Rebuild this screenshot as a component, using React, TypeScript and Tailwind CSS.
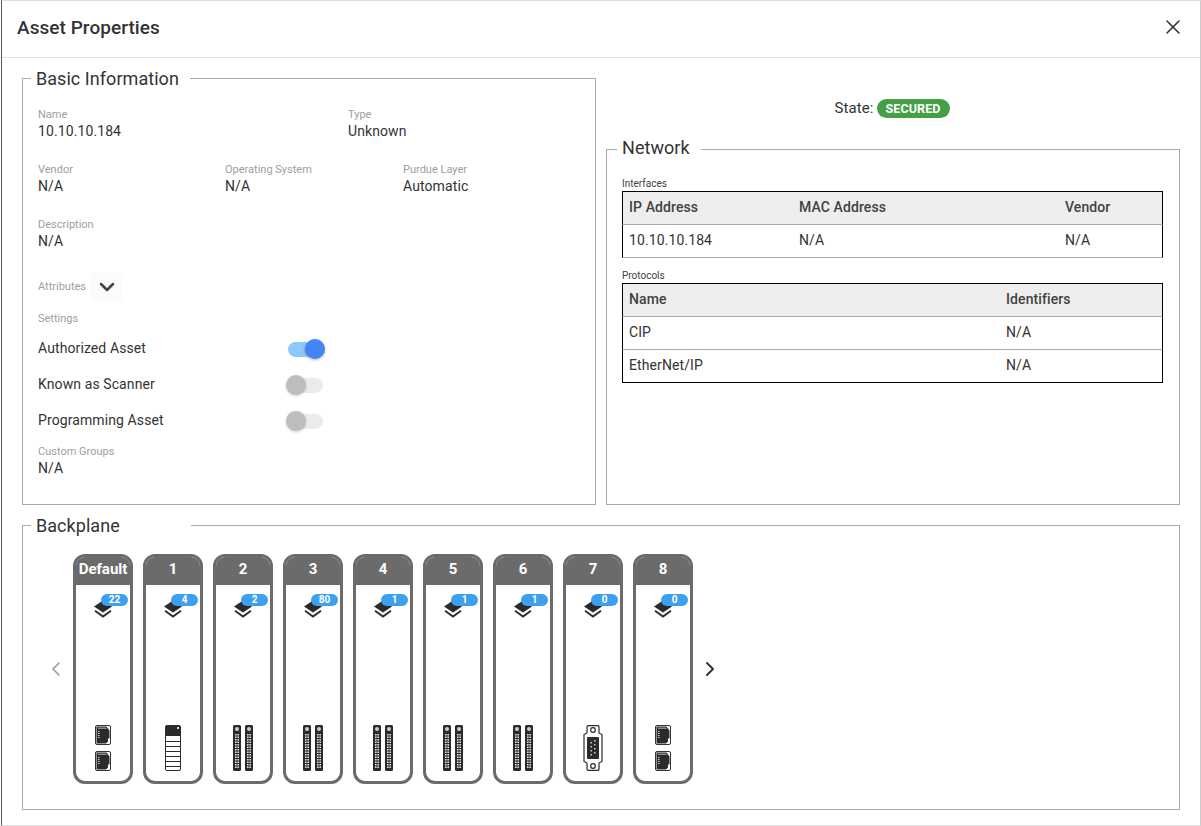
import React from 'react';
import { ChevronDown, ChevronLeft, ChevronRight, X } from 'lucide-react';

type SlotKind = 'rj45' | 'module' | 'din' | 'db9';

const slots: { name: string; count: number; kind: SlotKind }[] = [
  { name: 'Default', count: 22, kind: 'rj45' },
  { name: '1', count: 4, kind: 'module' },
  { name: '2', count: 2, kind: 'din' },
  { name: '3', count: 80, kind: 'din' },
  { name: '4', count: 1, kind: 'din' },
  { name: '5', count: 1, kind: 'din' },
  { name: '6', count: 1, kind: 'din' },
  { name: '7', count: 0, kind: 'db9' },
  { name: '8', count: 0, kind: 'rj45' },
];

function Field({ label, value, className }: { label: string; value: string; className?: string }) {
  return (
    <div className={className}>
      <div className="text-[11px] leading-[14px] text-[#9e9e9e]">{label}</div>
      <div className="-mt-px text-[14px] leading-[20px] text-[#333] tracking-[0.1px]">{value}</div>
    </div>
  );
}

function Toggle({ on }: { on?: boolean }) {
  return (
    <div className="relative w-[35px] h-[15px] rounded-full ml-auto mr-[2px]">
      <div className={on ? 'h-full rounded-full bg-[#8ec8fb]' : 'h-full rounded-full bg-[#ebebeb]'} />
      <div
        className={
          on
            ? 'absolute -top-[3px] -right-[2px] w-5 h-5 rounded-full bg-[#4285f4] shadow-[0_1px_3px_rgba(0,0,0,0.3)]'
            : 'absolute -top-[3px] -left-[2px] w-5 h-5 rounded-full bg-[#bdbdbd] shadow-[0_1px_3px_rgba(0,0,0,0.2)]'
        }
      />
    </div>
  );
}

function SettingRow({ label, on }: { label: string; on?: boolean }) {
  return (
    <div className="flex items-center h-9 w-[287px] text-[14px] text-[#333] tracking-[0.1px]">
      <span className="-mt-[2px]">{label}</span>
      <Toggle on={on} />
    </div>
  );
}

function Section({
  title,
  className,
  legendClass,
  children,
}: {
  title: string;
  className?: string;
  legendClass?: string;
  children: React.ReactNode;
}) {
  return (
    <fieldset className={`border border-[#aaaaaa] ${className ?? ''}`}>
      <legend className={`pl-[5px] pr-[11px] text-[18px] leading-[21px] text-[#333] tracking-[0.05px] ${legendClass ?? ''}`}>
        {title}
      </legend>
      {children}
    </fieldset>
  );
}

function StackIcon() {
  return (
    <svg width="18" height="19" viewBox="0 0 18 19" className="absolute left-[18px] top-[15px]">
      <path d="M9 0.5 L18 6.5 L9 12.5 L0 6.5 Z" fill="#2b2b2b" />
      <path d="M1 10.8 L9 16.6 L17 10.8" fill="none" stroke="#2b2b2b" strokeWidth="1.8" />
    </svg>
  );
}

function Rj45() {
  return (
    <svg width="16" height="20" viewBox="0 0 16 20">
      <rect x="0.5" y="0.5" width="15" height="19" rx="1.5" fill="#fff" stroke="#333" />
      <path d="M1.5 1.5 H11.5 L14.5 5.5 V13.5 H13 V16.5 L11 18.5 H1.5 Z" fill="#2b2b2b" />
      <path d="M3 6h1.6v1H3zM3 8h1.6v1H3zM3 10h1.6v1H3zM3 12h1.6v1H3z" fill="#c4c4c4" />
      <path d="M3 2.5 H11 L12 4 H3 Z" fill="#8a8a8a" />
    </svg>
  );
}

function ModuleIcon() {
  return (
    <svg width="16" height="46" viewBox="0 0 16 46">
      <rect x="0.5" y="0.5" width="15" height="45" rx="1.5" fill="#fff" stroke="#2b2b2b" />
      <path d="M1 1.5 Q1 0.5 2 0.5 H14 Q15 0.5 15 1.5 V11 H1 Z" fill="#2b2b2b" />
      <rect x="12" y="2" width="2" height="2" fill="#ddd" />
      <path d="M1 16.5H15M1 21.5H15M1 26.5H15M1 31.5H15M1 36.5H15M1 41.5H15" stroke="#2b2b2b" />
    </svg>
  );
}

function DinIcon() {
  const rows = Array.from({ length: 14 }, (_, i) => 9 + i * 2.5);
  const strip = (x: number) => (
    <g key={x}>
      <rect x={x} y="0" width="8" height="46" rx="1.5" fill="#2b2b2b" />
      <circle cx={x + 4} cy="4" r="2" fill="#ccc" />
      {rows.map((y) => (
        <g key={y}>
          <rect x={x + 2} y={y} width="1.6" height="1.5" fill="#e0e0e0" />
          <rect x={x + 4.4} y={y} width="1.6" height="1.5" fill="#e0e0e0" />
        </g>
      ))}
    </g>
  );
  return (
    <svg width="20" height="46" viewBox="0 0 20 46">
      {strip(0)}
      {strip(12)}
    </svg>
  );
}

function Db9Icon() {
  return (
    <svg width="20" height="46" viewBox="0 0 20 46">
      <path
        d="M5 0.7 H15 Q16 0.7 16 2 V8 L19 9.5 V36.5 L16 38 V44 Q16 45.3 15 45.3 H5 Q4 45.3 4 44 V38 L1 36.5 V9.5 L4 8 V2 Q4 0.7 5 0.7 Z"
        fill="#fff"
        stroke="#2b2b2b"
        strokeWidth="1.2"
      />
      <circle cx="10" cy="5" r="2.3" fill="#fff" stroke="#2b2b2b" strokeWidth="1.2" />
      <circle cx="10" cy="41" r="2.3" fill="#fff" stroke="#2b2b2b" strokeWidth="1.2" />
      <path d="M5 12 H15 Q16 12 16 13 V33 Q16 34 15 34 H5 Q4 34 4 33 V13 Q4 12 5 12 Z" fill="#2b2b2b" />
      <path d="M11 15h1.5v1.5H11zM11 19h1.5v1.5H11zM11 23h1.5v1.5H11zM11 27h1.5v1.5H11zM7.5 17h1.5v1.5H7.5zM7.5 21h1.5v1.5H7.5zM7.5 25h1.5v1.5H7.5zM7.5 29h1.5v1.5H7.5z" fill="#ccc" />
    </svg>
  );
}

function SlotCard({ name, count, kind }: { name: string; count: number; kind: SlotKind }) {
  return (
    <div className="w-[60px] h-[230px] rounded-[12px] border-[3px] border-[#6b6b6b] flex flex-col overflow-hidden bg-white shrink-0">
      <div className="h-[28px] bg-[#6b6b6b] text-white text-[15px] font-bold leading-[24px] text-center shrink-0 whitespace-nowrap -mx-[3px]">
        {name}
      </div>
      <div className="relative flex-1 flex flex-col items-center justify-end pb-[10px]">
        <StackIcon />
        <span className="absolute left-[25px] top-[9px] w-[27px] h-[12px] rounded-full bg-[#3f9fef] text-white text-[10px] font-bold leading-[11px] text-center">
          {count}
        </span>
        {kind === 'rj45' && (
          <div className="flex flex-col gap-[6px]">
            <Rj45 />
            <Rj45 />
          </div>
        )}
        {kind === 'module' && <ModuleIcon />}
        {kind === 'din' && <DinIcon />}
        {kind === 'db9' && <Db9Icon />}
      </div>
    </div>
  );
}

function TableHead({ cols }: { cols: { label: string; w: string }[] }) {
  return (
    <div className="flex h-[34px] items-center bg-[#eeeeee] border border-black border-b-[#aaaaaa] pl-[6px] pb-px text-[14px] font-medium text-[#424242] tracking-[0.1px]">
      {cols.map((c) => (
        <div key={c.label} className={c.w}>
          {c.label}
        </div>
      ))}
    </div>
  );
}

function TableRow({ cells, last }: { cells: { text: string; w: string }[]; last?: boolean }) {
  return (
    <div
      className={
        last
          ? 'flex h-[33px] items-center border-x border-b border-black pl-[6px] pb-px text-[14px] text-[#333] tracking-[0.1px]'
          : 'flex h-[33px] items-center border-x border-b border-x-black border-b-[#aaaaaa] pl-[6px] pb-px text-[14px] text-[#333] tracking-[0.1px]'
      }
    >
      {cells.map((c, i) => (
        <div key={i} className={c.w}>
          {c.text}
        </div>
      ))}
    </div>
  );
}

export default function App() {
  return (
    <div className="w-[1201px] h-[826px] bg-white pl-px font-['Roboto',sans-serif] overflow-hidden">
      <div className="h-full border-l border-l-[#555] border-t border-t-[#dddddd] border-r border-r-[#cccccc] border-b border-b-[#dddddd] flex flex-col">
        <div className="h-[57px] shrink-0 flex items-center justify-between border-b border-[#e0e0e0] pl-[15px] pr-[15px]">
          <h1 className="-mt-px text-[19px] font-medium text-[#333] tracking-[0.05px]">Asset Properties</h1>
          <X className="-mt-[4px] w-6 h-6 text-[#333]" strokeWidth={1.6} />
        </div>

        <div className="flex-1 pl-[20px] pr-[19px] pt-[10px]">
          <div className="flex gap-[10px] h-[437px]">
            <Section title="Basic Information" legendClass="-ml-[7px]" className="w-[574px] h-full px-[15px]">
              <div className="pt-[19px]">
                <div className="flex h-[55px]">
                  <Field label="Name" value="10.10.10.184" className="w-[310px]" />
                  <Field label="Type" value="Unknown" />
                </div>
                <div className="flex h-[55px]">
                  <Field label="Vendor" value="N/A" className="w-[187px]" />
                  <Field label="Operating System" value="N/A" className="w-[178px]" />
                  <Field label="Purdue Layer" value="Automatic" />
                </div>
                <div className="h-[55px]">
                  <Field label="Description" value="N/A" />
                </div>
                <div className="flex items-center h-[28px] text-[11px] text-[#9e9e9e]">
                  <span>Attributes</span>
                  <div className="ml-[5px] w-[32px] h-[28px] bg-[#fbfbfb] flex items-center justify-center">
                    <ChevronDown className="w-6 h-6 text-[#424242]" strokeWidth={2.5} />
                  </div>
                </div>
                <div className="text-[11px] leading-[14px] mt-[11px] text-[#9e9e9e]">Settings</div>
                <div className="mt-[5px]">
                  <SettingRow label="Authorized Asset" on />
                  <SettingRow label="Known as Scanner" />
                  <SettingRow label="Programming Asset" />
                </div>
                <Field label="Custom Groups" value="N/A" className="mt-[6px]" />
              </div>
            </Section>

            <div className="w-[574px] flex flex-col">
              <div className="h-[71px] pt-[29px] pr-[2px] flex items-start justify-center text-[15px] leading-[22px] text-[#333] shrink-0 tracking-[0.1px]">
                <span>State:</span>
                <span className="ml-[3px] mt-[2px] h-[19px] px-[9px] rounded-full bg-[#43a047] text-white text-[12.5px] font-bold leading-[19px]">
                  SECURED
                </span>
              </div>
              <Section title="Network" legendClass="-ml-[5px] relative -top-[2px]" className="flex-1 min-h-0 px-[15px]">
                <div className="pt-[17px] w-[541px]">
                  <div className="text-[10px] leading-[14px] text-[#424242]">Interfaces</div>
                  <TableHead
                    cols={[
                      { label: 'IP Address', w: 'w-[170px]' },
                      { label: 'MAC Address', w: 'w-[266px]' },
                      { label: 'Vendor', w: '' },
                    ]}
                  />
                  <TableRow
                    cells={[
                      { text: '10.10.10.184', w: 'w-[170px]' },
                      { text: 'N/A', w: 'w-[266px]' },
                      { text: 'N/A', w: '' },
                    ]}
                  />
                  <div className="text-[10px] leading-[14px] mt-[11px] text-[#424242]">Protocols</div>
                  <TableHead
                    cols={[
                      { label: 'Name', w: 'w-[377px]' },
                      { label: 'Identifiers', w: '' },
                    ]}
                  />
                  <TableRow
                    cells={[
                      { text: 'CIP', w: 'w-[377px]' },
                      { text: 'N/A', w: '' },
                    ]}
                  />
                  <TableRow
                    last
                    cells={[
                      { text: 'EtherNet/IP', w: 'w-[377px]' },
                      { text: 'N/A', w: '' },
                    ]}
                  />
                </div>
              </Section>
            </div>
          </div>

          <Section title="Backplane" legendClass="ml-[8px] w-[160px]" className="mt-[10px] w-[1158px] h-[295px]">
            <div className="flex items-center pt-[18px] pl-[21px]">
              <ChevronLeft className="w-6 h-6 text-[#9e9e9e] shrink-0" strokeWidth={1.7} />
              <div className="flex gap-[10px] ml-[5px]">
                {slots.map((s) => (
                  <SlotCard key={s.name} name={s.name} count={s.count} kind={s.kind} />
                ))}
              </div>
              <ChevronRight className="w-6 h-6 text-[#333] ml-[5px] shrink-0" strokeWidth={2} />
            </div>
          </Section>
        </div>
      </div>
    </div>
  );
}
